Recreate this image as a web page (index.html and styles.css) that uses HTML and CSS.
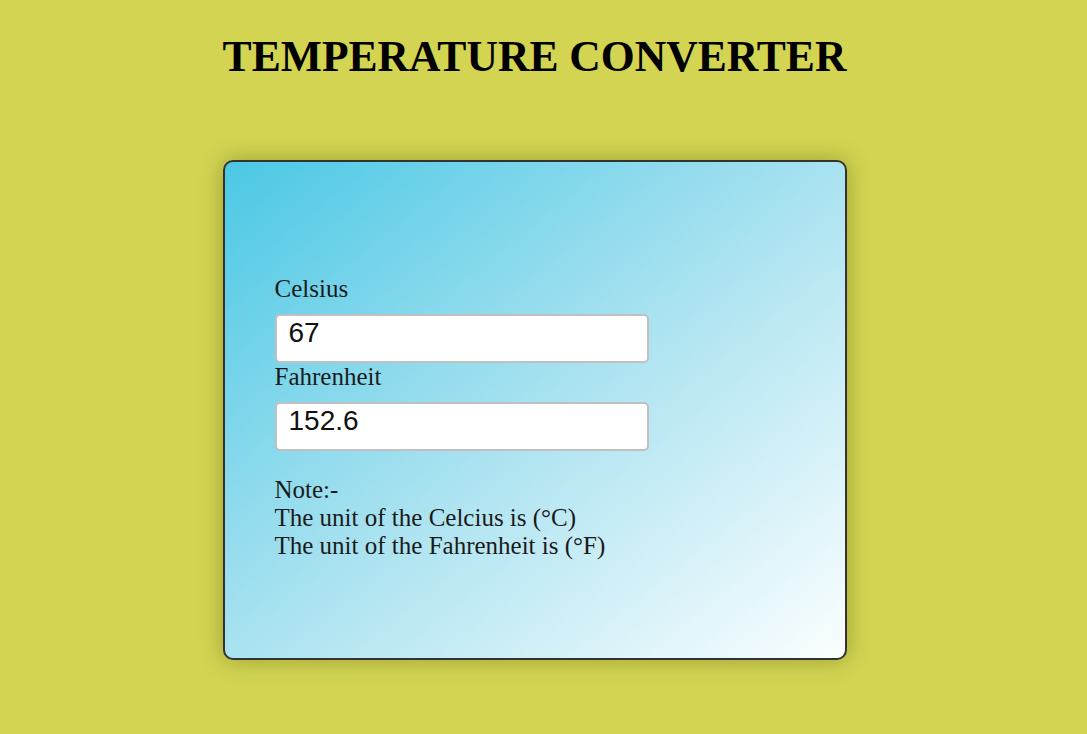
FILE: index.html
```html
<!DOCTYPE html>
<html lang="en">
<head>
<meta charset="utf-8">
<title>Temperature Converter</title>
<link rel="stylesheet" href="styles.css">
</head>
<body>
<div class="page">
  <h1 class="title">TEMPERATURE CONVERTER</h1>
  <div class="card">
    <label class="field-label" for="celsius">Celsius</label>
    <input class="field-input" id="celsius" type="text" value="67">
    <label class="field-label" for="fahrenheit">Fahrenheit</label>
    <input class="field-input" id="fahrenheit" type="text" value="152.6">
    <div class="note">
      <div>Note:-</div>
      <div>The unit of the Celcius is (°C)</div>
      <div>The unit of the Fahrenheit is (°F)</div>
    </div>
  </div>
</div>
</body>
</html>
```

FILE: styles.css
```css
html, body {
  margin: 0;
  padding: 0;
}
body {
  background: #d2d452;
  font-family: "Liberation Serif", "Times New Roman", serif;
  color: #000;
}
.page {
  width: 1069px;
  padding-bottom: 60px;
  display: flex;
  flex-direction: column;
  align-items: center;
}
.title {
  margin: 31px 0 0;
  font-size: 43.6px;
  font-weight: bold;
  text-align: center;
  line-height: normal;
}
.card {
  box-sizing: border-box;
  margin-top: 79px;
  width: 624px;
  height: 500px;
  border: 2px solid #333;
  border-radius: 10px;
  background: linear-gradient(to bottom right, #4bc8e5 0%, #a9e2f0 50%, #fbfeff 100%);
  box-shadow: 0 0 22px rgba(60, 60, 0, 0.35);
  padding: 113px 50px 0;
  display: flex;
  flex-direction: column;
  align-items: flex-start;
  font-size: 25px;
  color: #1a1a1a;
}
.field-label {
  display: block;
  line-height: normal;
}
.field-input {
  box-sizing: border-box;
  margin-top: 11px;
  width: 374px;
  height: 49px;
  border: 2px solid #c0c0c0;
  border-radius: 5px;
  background: #fff;
  padding: 0 10px 11px 12px;
  font-family: "Liberation Sans", Arial, sans-serif;
  font-size: 28px;
  color: #111;
  outline: none;
}
.note {
  margin-top: 25px;
  line-height: normal;
}
```
